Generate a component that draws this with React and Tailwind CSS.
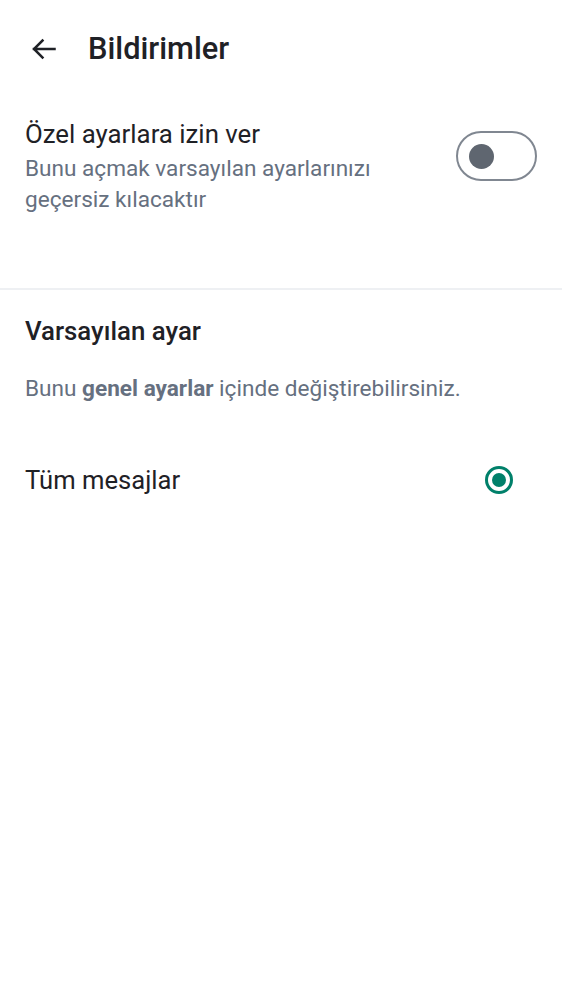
export default function App() {
  return (
    <div className="w-[562px] h-[1000px] bg-white" style={{ fontFamily: 'Roboto, "Noto Sans", sans-serif' }}>
      <div className="flex items-center h-[98px] pl-[31px]">
        <svg width="25" height="22" viewBox="0 0 25 22" fill="none" stroke="#1f2126" strokeWidth="2.5" strokeLinecap="square" strokeLinejoin="miter">
          <path d="M23.5 11H3 M11.5 2.5 L3 11 L11.5 19.5" />
        </svg>
        <h1 className="ml-[32px] text-[30.8px] font-medium text-[#1f2126] leading-none">Bildirimler</h1>
      </div>
      <div className="flex items-start justify-between pl-[25px] pr-[25px] pt-[20px] pb-[73px]">
        <div>
          <div className="text-[25.8px] text-[#1f2126] leading-[32px]">Özel ayarlara izin ver</div>
          <div className="mt-[3px] text-[22.6px] text-[#667080] leading-[31px] w-[380px]">Bunu açmak varsayılan ayarlarınızı geçersiz kılacaktır</div>
        </div>
        <div className="mt-[13px] w-[81px] h-[50px] rounded-full border-[2px] border-[#808791] flex items-center pl-[11px]">
          <div className="w-[25px] h-[25px] rounded-full bg-[#5f6670]" />
        </div>
      </div>
      <div className="h-[2px] bg-[#eef0f3]" />
      <div className="px-[25px] pt-[25px]">
        <div className="text-[25.8px] font-medium text-[#1f2126] leading-[32px]">Varsayılan ayar</div>
        <div className="mt-[26px] text-[22.6px] text-[#667080] leading-[31px]">
          Bunu <span className="font-bold">genel ayarlar</span> içinde değiştirebilirsiniz.
        </div>
      </div>
      <div className="flex items-center justify-between pl-[25px] pr-[49px] mt-[60px] h-[32px]">
        <div className="text-[25.6px] text-[#1f2126] leading-[32px]">Tüm mesajlar</div>
        <div className="w-[28px] h-[28px] rounded-full border-[3px] border-[#00806a] flex items-center justify-center">
          <div className="w-[14px] h-[14px] rounded-full bg-[#00806a]" />
        </div>
      </div>
    </div>
  );
}
